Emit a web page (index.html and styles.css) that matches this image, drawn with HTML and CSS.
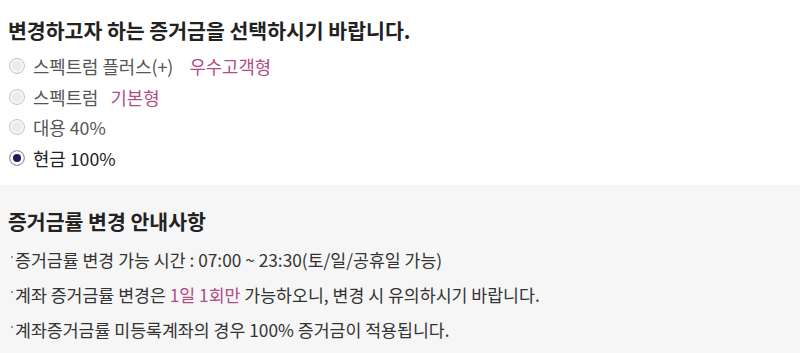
FILE: index.html
```html
<!DOCTYPE html>
<html>
<head>
<meta charset="UTF-8" />
<title>증거금률 변경</title>
<link rel="stylesheet" href="styles.css">
</head>
<body>

<div class="select">
    <h2 class="title">변경하고자 하는 증거금을 선택하시기 바랍니다.</h2>
    <ul class="options">
        <li class="opt"><span class="radio"></span>스펙트럼 플러스(+)<em class="tag wide">우수고객형</em></li>
        <li class="opt"><span class="radio"></span>스펙트럼<em class="tag">기본형</em></li>
        <li class="opt"><span class="radio"></span>대용 40%</li>
        <li class="opt on"><span class="radio"></span>현금 100%</li>
    </ul>
</div>

<div class="notice">
    <h3 class="title">증거금률 변경 안내사항</h3>
    <ul class="bullets">
        <li>증거금률 변경 가능 시간 : 07:00 ~ 23:30(토/일/공휴일 가능)</li>
        <li>계좌 증거금률 변경은 <em class="pink">1일 1회만</em> 가능하오니, 변경 시 유의하시기 바랍니다.</li>
        <li>계좌증거금률 미등록계좌의 경우 100% 증거금이 적용됩니다.</li>
    </ul>
</div>

</body>
</html>
```

FILE: styles.css
```css
* {
margin: 0;
padding: 0
}

html,body{
height:100%;
background-color: #fff;
font-family: "Noto Sans CJK KR", "Noto Sans", sans-serif;
color: #222;
}

ul{
list-style: none;
}

em{
font-style: normal;
}

.title{
font-size: 20.5px;
font-weight: bold;
line-height: 28px;
color: #222;
}

.select{
height: 185px;
padding: 16px 8px 0 8px;
box-sizing: border-box;
}

.options{
margin-top: 7px;
}

.opt{
display: flex;
align-items: center;
height: 30.5px;
font-size: 17.8px;
color: #555;
}

.opt.on{
color: #222;
}

.radio{
width: 14px;
height: 14px;
border: 1px solid #c6c6c6;
border-radius: 50%;
background: #ebebeb;
margin: 0 8px 0 1px;
box-shadow: inset 0 0 0 2px #f6f6f6;
}

.on .radio{
background: #1d1d5c;
border-color: #a9a9b4;
box-shadow: inset 0 0 0 3px #fff;
}

.tag{
color: #b24c86;
margin-left: 12px;
}

.tag.wide{
margin-left: 16px;
}

.notice{
background: #f6f6f6;
height: 168px;
padding: 22px 8px 0 8px;
box-sizing: border-box;
}

.bullets{
margin-top: 7px;
}

.bullets li{
font-size: 17.3px;
line-height: 35px;
color: #333;
position: relative;
padding-left: 7px;
}

.bullets li:before{
content: "";
position: absolute;
left: 3px;
top: 14px;
width: 2px;
height: 2px;
background: #999;
}

.pink{
color: #b24c86;
}
```
